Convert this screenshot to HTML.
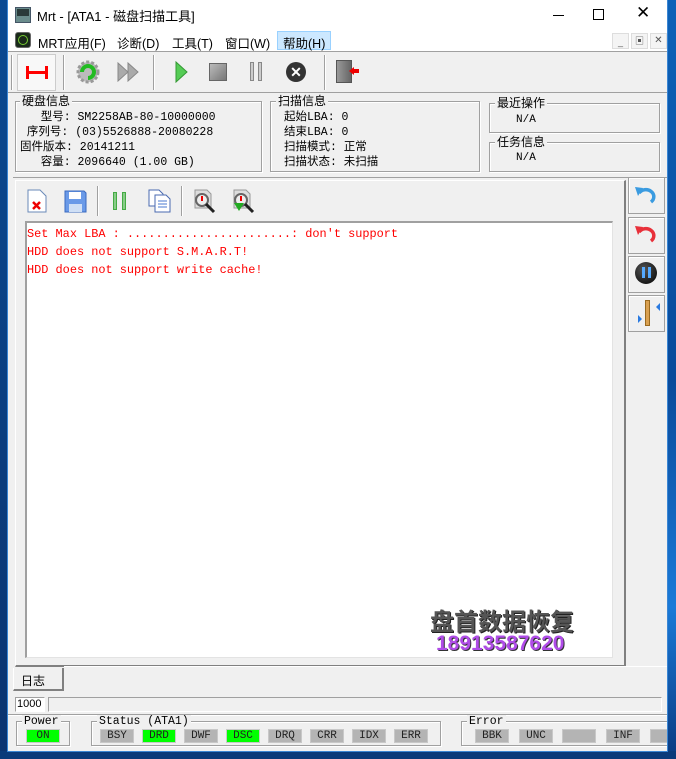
<!DOCTYPE html>
<html><head><meta charset="utf-8">
<style>
*{margin:0;padding:0;box-sizing:border-box}
body{width:676px;height:759px;overflow:hidden;position:relative;background:linear-gradient(160deg,#0a4f9a,#0b3f7e 60%,#0a2f66);font-family:"Liberation Sans","Noto Sans CJK SC",sans-serif;font-size:12px;color:#000}
.a{position:absolute}
#win{left:7px;top:0;width:662px;height:752px;background:#f0f0f0}
.cj{font-family:"Liberation Sans","Noto Sans CJK SC",sans-serif}
.mono{font-family:"Liberation Mono","Noto Sans CJK SC",monospace}
.grp{border:1px solid #a0a0a0;box-shadow:inset 1px 1px 0 #fff,1px 1px 0 #fff}
.gl{background:#f0f0f0;padding:0 2px;font-size:12px;line-height:13px}
.led{height:14px;background:#b4b4b4;border:1px solid #c8c8c8;font-family:"Liberation Mono",monospace;font-size:11px;text-align:center;line-height:12px;color:#222}
.on{background:#00ff00}
.sep{width:2px;border-left:1px solid #a0a0a0;border-right:1px solid #fff}
.rb{left:628px;width:37px;height:37px;border:1px solid #a0a0a0;box-shadow:inset 1px 1px 0 #fff;background:#f0f0f0}
.lg{font-size:11.9px;line-height:18px;color:#f00;white-space:pre}
</style></head><body>
<div id="win" class="a"></div>
<div class="a" style="left:7px;top:0;width:662px;height:51px;background:#fff"></div>
<div class="a" style="left:15px;top:7px;width:16px;height:16px;background:#6a8c8c;border:1px solid #456"></div>
<div class="a" style="left:17px;top:9px;width:12px;height:7px;background:#2a3a3a"></div>
<div class="a cj" style="left:37px;top:6px;font-size:13px">Mrt - [ATA1 - 磁盘扫描工具]</div>
<div class="a" style="left:553px;top:15px;width:11px;height:1px;background:#000"></div>
<div class="a" style="left:593px;top:9px;width:11px;height:11px;border:1px solid #000"></div>
<div class="a" style="left:636px;top:3px;font-size:17px;font-weight:300">✕</div>
<div class="a" style="left:15px;top:32px;width:16px;height:16px;background:#1a2a1a;border-radius:3px;border:1px solid #666"></div>
<div class="a" style="left:18px;top:35px;width:10px;height:10px;border:1px solid #7c3;border-radius:50%"></div>
<div class="a" style="left:277px;top:31px;width:54px;height:19px;background:#cce8ff;border:1px solid #99d1ff"></div>
<div class="a cj" style="left:38px;top:33px;font-size:12.5px">MRT应用(F)</div>
<div class="a cj" style="left:117px;top:33px;font-size:12.5px">诊断(D)</div>
<div class="a cj" style="left:172px;top:33px;font-size:12.5px">工具(T)</div>
<div class="a cj" style="left:225px;top:33px;font-size:12.5px">窗口(W)</div>
<div class="a cj" style="left:283px;top:33px;font-size:12.5px">帮助(H)</div>
<div class="a" style="left:612px;top:33px;width:17px;height:16px;border:1px solid #ddd;background:#f4f4f4;font-size:9px;text-align:center;line-height:17px;color:#555">_</div>
<div class="a" style="left:631px;top:33px;width:17px;height:16px;border:1px solid #ddd;background:#f4f4f4;font-size:9px;text-align:center;line-height:14px;color:#555">▣</div>
<div class="a" style="left:650px;top:33px;width:17px;height:16px;border:1px solid #ddd;background:#f4f4f4;font-size:10px;text-align:center;line-height:14px;color:#555">✕</div>
<div class="a" style="left:8px;top:51px;width:660px;height:42px;background:#f0f0f0;border-top:1px solid #a0a0a0;border-bottom:1px solid #a0a0a0"></div>
<div class="a sep" style="left:11px;top:55px;height:35px"></div>
<div class="a" style="left:17px;top:54px;width:39px;height:37px;border:1px solid #ccc;background:#f8f8f8"></div>
<div class="a" style="left:26px;top:71px;width:22px;height:3px;background:#f00"></div>
<div class="a" style="left:26px;top:66px;width:3px;height:13px;background:#f00"></div>
<div class="a" style="left:45px;top:66px;width:3px;height:13px;background:#f00"></div>
<div class="a sep" style="left:63px;top:55px;height:35px"></div>
<svg class="a" style="left:75px;top:59px" width="26" height="26"><circle cx="13" cy="13" r="10" fill="#bbb" stroke="#999" stroke-width="3" stroke-dasharray="3 2"/><path d="M7 13a6 6 0 1 1 6 6" fill="none" stroke="#2b2" stroke-width="4"/></svg>
<svg class="a" style="left:117px;top:62px" width="22" height="20"><path d="M1 1l10 9-10 9zM11 1l10 9-10 9z" fill="#aaa" stroke="#888"/></svg>
<div class="a sep" style="left:153px;top:55px;height:35px"></div>
<svg class="a" style="left:175px;top:61px" width="14" height="22"><path d="M1 1l11 10-11 10z" fill="#5c5" stroke="#393"/></svg>
<div class="a" style="left:209px;top:63px;width:18px;height:18px;background:linear-gradient(135deg,#bbb,#777);border:1px solid #666"></div>
<div class="a" style="left:250px;top:62px;width:4px;height:19px;background:#ccc;border:1px solid #888"></div>
<div class="a" style="left:258px;top:62px;width:4px;height:19px;background:#ccc;border:1px solid #888"></div>
<div class="a" style="left:286px;top:62px;width:20px;height:20px;border-radius:50%;background:#333;color:#fff;font-size:14px;font-weight:bold;text-align:center;line-height:20px">✕</div>
<div class="a sep" style="left:324px;top:55px;height:35px"></div>
<div class="a" style="left:336px;top:60px;width:16px;height:23px;background:linear-gradient(90deg,#999,#666);border:1px solid #555"></div>
<div class="a" style="left:349px;top:67px;width:10px;height:8px;background:#e00;clip-path:polygon(0 50%,50% 0,50% 25%,100% 25%,100% 75%,50% 75%,50% 100%)"></div>
<div class="a grp" style="left:15px;top:101px;width:247px;height:71px"></div>
<div class="a gl cj" style="left:20px;top:95px">硬盘信息</div>
<div class="a mono" style="left:20px;top:110px;font-size:11.5px;line-height:15px;white-space:pre">   型号: SM2258AB-80-10000000
 序列号: (03)5526888-20080228
固件版本: 20141211
   容量: 2096640 (1.00 GB)</div>
<div class="a grp" style="left:270px;top:101px;width:210px;height:71px"></div>
<div class="a gl cj" style="left:276px;top:95px">扫描信息</div>
<div class="a mono" style="left:284px;top:110px;font-size:11.5px;line-height:15px;white-space:pre">起始LBA: 0
结束LBA: 0
扫描模式: 正常
扫描状态: 未扫描</div>
<div class="a grp" style="left:489px;top:103px;width:171px;height:30px"></div>
<div class="a gl cj" style="left:495px;top:97px">最近操作</div>
<div class="a mono" style="left:516px;top:114px;font-size:11px">N/A</div>
<div class="a grp" style="left:489px;top:142px;width:171px;height:30px"></div>
<div class="a gl cj" style="left:495px;top:136px">任务信息</div>
<div class="a mono" style="left:516px;top:152px;font-size:11px">N/A</div>
<div class="a" style="left:13px;top:177px;width:655px;height:1px;background:#a0a0a0"></div>
<div class="a" style="left:15px;top:180px;width:611px;height:487px;border-right:2px solid #808080;border-bottom:2px solid #808080;border-left:1px solid #fff;border-top:1px solid #fff"></div>
<svg class="a" style="left:27px;top:189px" width="20" height="24"><path d="M1 1h12l6 6v16H1z" fill="#fff" stroke="#6a8ab8"/><path d="M6 13l7 7M13 13l-7 7" stroke="#e00" stroke-width="2.5"/></svg>
<svg class="a" style="left:64px;top:190px" width="23" height="23"><path d="M1 1h19l2 2v19H1z" fill="#6a9ae8" stroke="#3a6ac0"/><rect x="5" y="2" width="12" height="7" fill="#fff"/><rect x="5" y="14" width="13" height="8" fill="#cfdff5"/></svg>
<div class="a sep" style="left:97px;top:186px;height:30px"></div>
<div class="a" style="left:113px;top:192px;width:4px;height:18px;background:#8c8;border:1px solid #4a4"></div>
<div class="a" style="left:122px;top:192px;width:4px;height:18px;background:#8c8;border:1px solid #4a4"></div>
<svg class="a" style="left:148px;top:189px" width="23" height="24"><path d="M1 1h10l4 4v12H1z" fill="#fff" stroke="#4a6ab0"/><path d="M7 6h11l4 4v13H7z" fill="#fff" stroke="#4a6ab0"/><path d="M10 12h9M10 15h9M10 18h9" stroke="#4a7ad0"/></svg>
<div class="a sep" style="left:181px;top:186px;height:30px"></div>
<svg class="a" style="left:192px;top:189px" width="24" height="25"><path d="M3 1h12l4 4v14H3z" fill="#ddd" stroke="#999"/><circle cx="10" cy="11" r="6" fill="#eee" stroke="#666" stroke-width="2"/><path d="M14 15l8 8" stroke="#222" stroke-width="3"/><path d="M10 7v5" stroke="#e00" stroke-width="2"/></svg>
<svg class="a" style="left:231px;top:189px" width="24" height="25"><path d="M3 1h12l4 4v14H3z" fill="#ddd" stroke="#999"/><circle cx="10" cy="11" r="6" fill="#eee" stroke="#666" stroke-width="2"/><path d="M14 15l8 8" stroke="#222" stroke-width="3"/><path d="M10 7v5" stroke="#e00" stroke-width="2"/><path d="M3 14h10l-5 8z" fill="#2a2"/></svg>
<div class="a" style="left:25px;top:221px;width:588px;height:437px;background:#fff;border-top:2px solid #a0a0a0;border-left:2px solid #a0a0a0;border-right:1px solid #e3e3e3;border-bottom:1px solid #e3e3e3"></div>
<div class="a mono lg" style="left:27px;top:225px">Set Max LBA : .......................: don't support
HDD does not support S.M.A.R.T!
HDD does not support write cache!</div>
<div class="a cj" style="left:430px;top:602px;font-size:24px;font-weight:bold;color:#555;text-shadow:1px 1px 0 #222">盘首数据恢复</div>
<div class="a" style="left:436px;top:632px;font-size:21px;font-weight:bold;color:#b04ce8;text-shadow:1px 1px 0 #333">18913587620</div>
<div class="a rb" style="top:177px"></div>
<div class="a rb" style="top:217px"></div>
<div class="a rb" style="top:256px"></div>
<div class="a rb" style="top:295px"></div>
<svg class="a" style="left:634px;top:183px" width="24" height="24"><path d="M5 10a8 7 0 1 1 12 9" fill="none" stroke="#3a9be0" stroke-width="3.5"/><path d="M1 4l8 1-5 8z" fill="#3a9be0"/></svg>
<svg class="a" style="left:634px;top:222px" width="24" height="24"><path d="M5 10a8 7 0 1 1 12 9" fill="none" stroke="#e8303a" stroke-width="3.5"/><path d="M1 4l8 1-5 8z" fill="#e8303a"/></svg>
<div class="a" style="left:635px;top:262px;width:22px;height:22px;border-radius:50%;background:radial-gradient(circle at 40% 35%,#555,#000)"></div>
<div class="a" style="left:642px;top:267px;width:3px;height:11px;background:#5af"></div>
<div class="a" style="left:648px;top:267px;width:3px;height:11px;background:#5af"></div>
<div class="a" style="left:645px;top:300px;width:5px;height:26px;background:#d9a050;border:1px solid #9a6a20"></div>
<div class="a" style="left:652px;top:303px;width:0;height:0;border:4px solid transparent;border-right-color:#2a7ae0"></div>
<div class="a" style="left:638px;top:315px;width:0;height:0;border:4px solid transparent;border-left-color:#2a7ae0"></div>
<div class="a" style="left:64px;top:666px;width:604px;height:1px;background:#fff"></div>
<div class="a" style="left:13px;top:668px;width:51px;height:23px;border-left:1px solid #fff;border-right:2px solid #808080;border-bottom:2px solid #808080;background:#f0f0f0"></div>
<div class="a cj" style="left:21px;top:672px;font-size:12px">日志</div>
<div class="a" style="left:15px;top:697px;width:30px;height:15px;border:1px solid #a0a0a0;background:#fff;border-right-color:#fff;border-bottom-color:#fff;font-size:11px;line-height:13px;padding-left:1px">1000</div>
<div class="a" style="left:48px;top:697px;width:614px;height:15px;border:1px solid #a0a0a0;border-right-color:#fff;border-bottom-color:#fff"></div>
<div class="a" style="left:8px;top:714px;width:660px;height:1px;background:#a0a0a0"></div>
<div class="a" style="left:8px;top:715px;width:660px;height:1px;background:#fff"></div>
<div class="a grp" style="left:16px;top:721px;width:54px;height:25px"></div>
<div class="a gl mono" style="left:22px;top:715px;font-size:11.5px">Power</div>
<div class="a led on" style="left:26px;top:729px;width:34px">ON</div>
<div class="a grp" style="left:91px;top:721px;width:350px;height:25px"></div>
<div class="a gl mono" style="left:97px;top:715px;font-size:11.5px">Status (ATA1)</div>
<div class="a led" style="left:100px;top:729px;width:34px">BSY</div>
<div class="a led on" style="left:142px;top:729px;width:34px">DRD</div>
<div class="a led" style="left:184px;top:729px;width:34px">DWF</div>
<div class="a led on" style="left:226px;top:729px;width:34px">DSC</div>
<div class="a led" style="left:268px;top:729px;width:34px">DRQ</div>
<div class="a led" style="left:310px;top:729px;width:34px">CRR</div>
<div class="a led" style="left:352px;top:729px;width:34px">IDX</div>
<div class="a led" style="left:394px;top:729px;width:34px">ERR</div>
<div class="a grp" style="left:461px;top:721px;width:220px;height:25px"></div>
<div class="a gl mono" style="left:467px;top:715px;font-size:11.5px">Error</div>
<div class="a led" style="left:475px;top:729px;width:34px">BBK</div>
<div class="a led" style="left:519px;top:729px;width:34px">UNC</div>
<div class="a led" style="left:562px;top:729px;width:34px"></div>
<div class="a led" style="left:606px;top:729px;width:34px">INF</div>
<div class="a led" style="left:650px;top:729px;width:34px"></div>
<div class="a" style="left:0;top:0;width:7px;height:759px;background:linear-gradient(180deg,#0a4a92,#0b3470)"></div>
<div class="a" style="left:668px;top:0;width:8px;height:759px;background:linear-gradient(180deg,#0d62b8,#0a4a9a 50%,#1a7ad8 80%,#0a3a80)"></div>
<div class="a" style="left:7px;top:0;width:1px;height:752px;background:#3a86d4"></div>
<div class="a" style="left:667px;top:0;width:1px;height:752px;background:#3a86d4"></div>
<div class="a" style="left:0;top:751px;width:676px;height:8px;background:#0a3a7a"></div>
<div class="a" style="left:7px;top:751px;width:661px;height:1px;background:#3a86d4"></div>
</body></html>
